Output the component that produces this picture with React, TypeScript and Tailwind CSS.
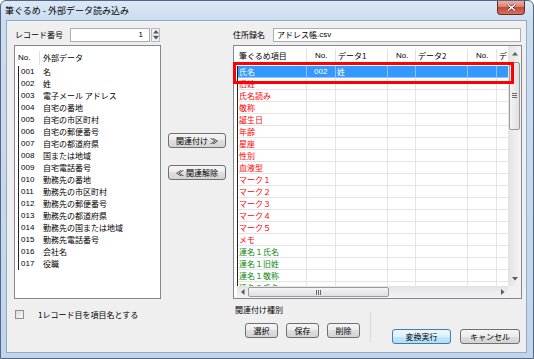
import React from 'react'

const JP = "font-['Noto_Sans_CJK_JP',sans-serif]"
const NUM = "font-['Liberation_Sans',sans-serif]"

const EXT = [
  '名', '姓', '電子メール アドレス', '自宅の番地', '自宅の市区町村', '自宅の郵便番号', '自宅の都道府県',
  '国または地域', '自宅電話番号', '勤務先の番地', '勤務先の市区町村', '勤務先の郵便番号', '勤務先の都道府県',
  '勤務先の国または地域', '勤務先電話番号', '会社名', '役職',
]

const RED = ['氏名', '旧姓', '氏名読み', '敬称', '誕生日', '年齢', '星座', '性別', '血液型',
  'マーク１', 'マーク２', 'マーク３', 'マーク４', 'マーク５', 'メモ']
const GREEN = ['連名１氏名', '連名１旧姓', '連名１敬称', '連名２氏名']

// 列幅（筆ぐるめ項目 / No. / データ1 / No. / データ2 / No. / デ…）
const COLS = ['w-[69px]', 'w-[29px]', 'w-[52px]', 'w-[28px]', 'w-[52px]', 'w-[29px]', 'w-[11px]']
const HEAD = ['筆ぐるめ項目', 'No.', 'データ1', 'No.', 'データ2', 'No.', 'デ']

function Tri({ dir }: { dir: 'up' | 'down' | 'left' | 'right' }) {
  const d = {
    up: 'M3 0L6 3.5H0z',
    down: 'M0 0H6L3 3.5z',
    left: 'M0 3L3.5 0V6z',
    right: 'M0 0L3.5 3L0 6z',
  }[dir]
  const vert = dir === 'up' || dir === 'down'
  return (
    <svg width={vert ? 6 : 4} height={vert ? 4 : 6} viewBox={vert ? '0 0 6 4' : '0 0 4 6'}>
      <path d={d} fill="#5a5a5a" />
    </svg>
  )
}

function Btn({ children, w, primary }: { children: React.ReactNode; w: string; primary?: boolean }) {
  return (
    <div
      className={`${w} flex h-[15px] shrink-0 items-center justify-center whitespace-nowrap rounded-[3px] border text-[8px] leading-none text-black ${
        primary
          ? 'border-[#3c7fb1] bg-[linear-gradient(180deg,#edf7fd_0%,#dcf1fc_50%,#c4e8fd_50%,#b2ddf6_100%)]'
          : 'border-[#707070] bg-[linear-gradient(180deg,#f5f5f5_0%,#ececec_50%,#dfdfdf_50%,#d3d3d3_100%)]'
      }`}
    >
      {children}
    </div>
  )
}

function GridRow({ name, color, selected }: { name: string; color: string; selected?: boolean }) {
  return (
    <div className={`flex h-[12px] shrink-0 ${selected ? 'bg-[#3399ff] text-white' : color}`}>
      {COLS.map((w, i) => (
        <div
          key={i}
          className={`${w} flex shrink-0 items-center overflow-hidden whitespace-nowrap border-b ${
            i < 6 ? 'border-r' : ''
          } ${selected ? 'border-[#8cc4ff]' : 'border-[#e4e4e4]'} ${i === 1 ? 'pl-[7px]' : 'pl-px'}`}
        >
          {i === 0 && name}
          {selected && i === 1 && <span className={NUM}>002</span>}
          {selected && i === 2 && '姓'}
        </div>
      ))}
    </div>
  )
}

export default function App() {
  return (
    <div className={`h-[359px] w-[534px] bg-white ${JP}`}>
      <div className="relative flex h-[359px] w-[534px] flex-col overflow-hidden rounded-t-[6px] border border-[#56687f] bg-[linear-gradient(180deg,#dbe8f7_0px,#cadcf0_20px,#c0d5ec_100%)]">
        {/* タイトルバー */}
        <div className="flex h-[19px] shrink-0 items-center pl-[4px] text-[9px] leading-none text-black">
          筆ぐるめ - 外部データ読み込み
        </div>
        <div className="absolute right-[8px] top-0 flex h-[14px] w-[28px] items-center justify-center rounded-b-[4px] border border-t-0 border-[#6e2a22] bg-[linear-gradient(180deg,#eab0a4_0%,#d98070_45%,#c54a38_50%,#d4705d_100%)]">
          <svg width="9" height="7" viewBox="0 0 9 7">
            <path d="M1 0.5L8 6.5M8 0.5L1 6.5" stroke="#5b1e17" strokeWidth="2.6" />
            <path d="M1 0.5L8 6.5M8 0.5L1 6.5" stroke="#ffffff" strokeWidth="1.5" />
          </svg>
        </div>

        {/* 本体 */}
        <div className="ml-[5px] flex h-[333px] w-[521px] shrink-0 border border-[#94a9c3] bg-[#efefef] pl-[7px] pt-[7px] text-[8px] leading-none text-black">
          {/* 左：外部データ */}
          <div className="flex w-[147px] shrink-0 flex-col">
            <div className="flex h-[14px] shrink-0 items-center">
              <span className="w-[56px] pl-px">レコード番号</span>
              <div className={`flex h-[14px] w-[80px] items-center justify-end border border-[#abadb3] bg-white pr-[6px] ${NUM}`}>1</div>
              <div className="ml-px flex h-[14px] w-[9px] flex-col border border-[#b5bac2] bg-[#eef1f5]">
                <div className="flex flex-1 items-center justify-center border-b border-[#c8ccd3]"><Tri dir="up" /></div>
                <div className="flex flex-1 items-center justify-center"><Tri dir="down" /></div>
              </div>
            </div>
            <div className="mt-[3px] flex h-[254px] shrink-0 flex-col border border-[#828790] bg-white">
              <div className="mt-[3px] flex h-[17px] shrink-0 items-center pl-[3px]">
                <div className={`flex h-[14px] w-[22px] items-center border-r border-[#e2e2e2] ${NUM}`}>No.</div>
                <div className="pl-[3px]">外部データ</div>
              </div>
              <div className="ml-[3px] flex flex-col border-l border-[#222222]">
                {EXT.map((t, i) => (
                  <div key={i} className="flex h-[12px] items-center whitespace-nowrap">
                    <span className={`w-[24px] shrink-0 pl-[2px] ${NUM}`}>{String(i + 1).padStart(3, '0')}</span>
                    <span>{t}</span>
                  </div>
                ))}
              </div>
            </div>
            <div className="mt-[11px] flex h-[9px] items-center">
              <div className="ml-px h-[9px] w-[9px] border border-[#8f8f8f] bg-[linear-gradient(135deg,#d9d9d9,#fafafa)]" />
              <span className="ml-[14px]">1レコード目を項目名とする</span>
            </div>
          </div>

          {/* 中央：ボタン */}
          <div className="flex w-[72px] shrink-0 flex-col pl-[7px]">
            <div className="mt-[105px]">
              <Btn w="w-[58px]">関連付け ≫</Btn>
            </div>
            <div className="mt-[17px]">
              <Btn w="w-[58px]">≪ 関連解除</Btn>
            </div>
          </div>

          {/* 右：筆ぐるめ項目 */}
          <div className="flex w-[289px] shrink-0 flex-col">
            <div className="flex h-[14px] shrink-0 items-center">
              <span className="w-[40px]">住所録名</span>
              <div className="flex h-[14px] w-[248px] items-center border border-[#abadb3] bg-white pl-[3px]">
                アドレス帳<span className={NUM}>.csv</span>
              </div>
            </div>
            <div className="relative mt-[3px] flex h-[254px] shrink-0 border border-[#828790] bg-white">
              <div className="w-[3px] shrink-0" />
              <div className="flex w-[271px] shrink-0 flex-col">
                <div className="flex h-[20px] shrink-0 pl-px pt-[3px]">
                  {COLS.map((w, i) => (
                    <div
                      key={i}
                      className={`${w} flex h-[14px] shrink-0 items-center overflow-hidden whitespace-nowrap ${
                        i < 6 ? 'border-r border-[#e2e2e2]' : ''
                      } ${i === 0 ? 'pl-px' : i % 2 === 1 ? `pl-[8px] ${NUM}` : 'pl-[2px]'}`}
                    >
                      {HEAD[i]}
                    </div>
                  ))}
                </div>
                <div className="flex h-[220px] shrink-0 flex-col overflow-hidden border-l border-[#222222]">
                  {RED.map((t, i) => (
                    <GridRow key={t} name={t} color="text-[#ff0000]" selected={i === 0} />
                  ))}
                  {GREEN.map(t => (
                    <GridRow key={t} name={t} color="text-[#0b8a0b]" />
                  ))}
                </div>
                <div className="flex h-[12px] shrink-0 items-center bg-[linear-gradient(180deg,#e3e3e3,#f4f4f4)]">
                  <div className="flex w-[11px] justify-center"><Tri dir="left" /></div>
                  <div className="relative flex h-[10px] w-[141px] items-center justify-center rounded-[2px] border border-[#9a9a9a] bg-[linear-gradient(180deg,#f4f4f4,#e0e0e0)]">
                    <svg width="6" height="5" viewBox="0 0 6 5">
                      <path d="M0.5 0V5M2.5 0V5M4.5 0V5" stroke="#6a6a6a" strokeWidth="1" />
                    </svg>
                  </div>
                  <div className="flex-1" />
                  <div className="flex w-[11px] justify-center"><Tri dir="right" /></div>
                </div>
              </div>
              <div className="flex w-[13px] shrink-0 flex-col">
                <div className="flex h-[240px] flex-col items-center bg-[linear-gradient(90deg,#e3e3e3,#f4f4f4)]">
                  <div className="flex h-[15px] items-center justify-center"><Tri dir="up" /></div>
                  <div className="mt-px flex h-[68px] w-[11px] items-center justify-center rounded-[2px] border border-[#9a9a9a] bg-[linear-gradient(90deg,#f4f4f4,#e0e0e0)]">
                    <svg width="5" height="6" viewBox="0 0 5 6">
                      <path d="M0 0.5H5M0 2.5H5M0 4.5H5" stroke="#6a6a6a" strokeWidth="1" />
                    </svg>
                  </div>
                  <div className="flex-1" />
                  <div className="flex h-[15px] items-center justify-center"><Tri dir="down" /></div>
                </div>
                <div className="h-[12px] bg-[#f0f0f0]" />
              </div>
              {/* 強調枠 */}
              <div className="pointer-events-none absolute left-[-1px] top-[16px] h-[22px] w-[281px] border-[3px] border-[#ff0000]" />
            </div>

            <div className="mt-[5px] flex">
              <div className="flex w-[137px] shrink-0 flex-col pl-[2px]">
                <div className="flex h-[12px] items-center">関連付け種別</div>
                <div className="mt-[7px] flex gap-[8px] pl-[10px]">
                  <Btn w="w-[33px]">選択</Btn>
                  <Btn w="w-[33px]">保存</Btn>
                  <Btn w="w-[33px]">削除</Btn>
                </div>
              </div>
              <div className="mt-[8px] h-[30px] w-px bg-[#dadada]" />
              <div className="ml-[21px] mt-[25px]">
                <Btn w="w-[59px]" primary>変換実行</Btn>
              </div>
              <div className="ml-[9px] mt-[25px]">
                <Btn w="w-[60px]">キャンセル</Btn>
              </div>
            </div>
          </div>
        </div>
      </div>
    </div>
  )
}
